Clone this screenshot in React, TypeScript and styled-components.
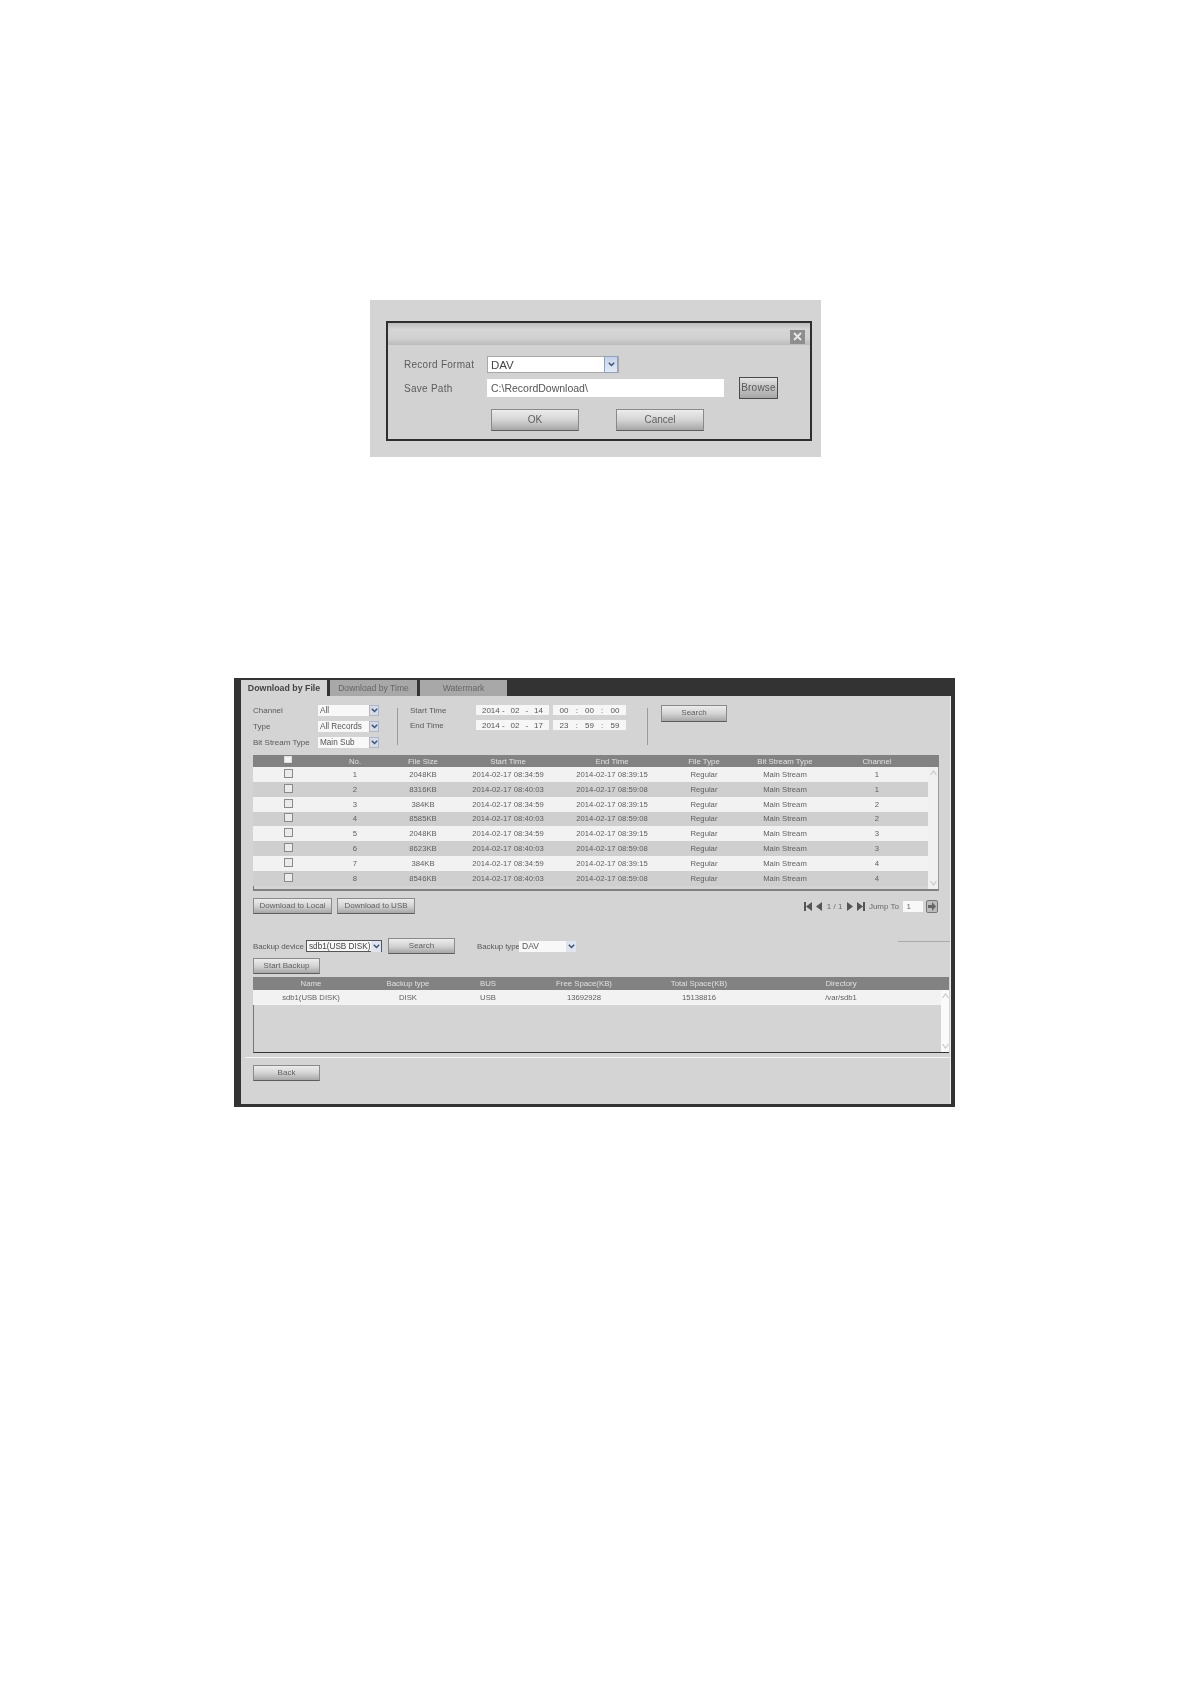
import React from 'react'
import styled, { createGlobalStyle } from 'styled-components'

const GlobalStyle = createGlobalStyle`
  html, body {
    margin: 0;
    padding: 0;
    background: #fff;
  }
  * {
    box-sizing: border-box;
  }
`

const files = [
  ['1', '2048KB', '2014-02-17 08:34:59', '2014-02-17 08:39:15', 'Regular', 'Main Stream', '1'],
  ['2', '8316KB', '2014-02-17 08:40:03', '2014-02-17 08:59:08', 'Regular', 'Main Stream', '1'],
  ['3', '384KB', '2014-02-17 08:34:59', '2014-02-17 08:39:15', 'Regular', 'Main Stream', '2'],
  ['4', '8585KB', '2014-02-17 08:40:03', '2014-02-17 08:59:08', 'Regular', 'Main Stream', '2'],
  ['5', '2048KB', '2014-02-17 08:34:59', '2014-02-17 08:39:15', 'Regular', 'Main Stream', '3'],
  ['6', '8623KB', '2014-02-17 08:40:03', '2014-02-17 08:59:08', 'Regular', 'Main Stream', '3'],
  ['7', '384KB', '2014-02-17 08:34:59', '2014-02-17 08:39:15', 'Regular', 'Main Stream', '4'],
  ['8', '8546KB', '2014-02-17 08:40:03', '2014-02-17 08:59:08', 'Regular', 'Main Stream', '4'],
]

const fileHead = ['No.', 'File Size', 'Start Time', 'End Time', 'File Type', 'Bit Stream Type', 'Channel']
const fileCols = '70px 64px 72px 98px 110px 74px 88px 96px 1fr'

const diskHead = ['Name', 'Backup type', 'BUS', 'Free Space(KB)', 'Total Space(KB)', 'Directory']
const diskRow = ['sdb1(USB DISK)', 'DISK', 'USB', '13692928', '15138816', '/var/sdb1']
const diskCols = '116px 78px 82px 110px 120px 164px 1fr'

const Chevron = () => (
  <svg width='7' height='5' viewBox='0 0 7 5'>
    <path d='M0.8 0.8 L3.5 3.6 L6.2 0.8' fill='none' stroke='#3a4f78' strokeWidth='1.4' />
  </svg>
)

const Select = ({ value, width }: { value: string; width: number }) => (
  <SelectBox $width={width}>
    <SelectText>{value}</SelectText>
    <SelectArrow>
      <Chevron />
    </SelectArrow>
  </SelectBox>
)

const PageIcon = ({ kind }: { kind: 'first' | 'prev' | 'next' | 'last' }) => {
  const paths = {
    first: 'M0 0h2v9H0z M8 0v9L2 4.5z',
    prev: 'M7 0v9L1 4.5z',
    next: 'M1 0v9l6-4.5z',
    last: 'M0 0v9l6-4.5z M6 0h2v9H6z',
  }
  return (
    <svg width='8' height='9' viewBox='0 0 8 9'>
      <path d={paths[kind]} fill='#555' />
    </svg>
  )
}

const ScrollBar = ({ width, white }: { width: number; white?: boolean }) => (
  <ScrollTrack $width={width} $white={white}>
    <svg width='7' height='6' viewBox='0 0 7 6'>
      <path d='M0.5 5 L3.5 1 L6.5 5' fill='none' stroke='#c4c8d0' strokeWidth='1.2' />
    </svg>
    <svg width='7' height='6' viewBox='0 0 7 6'>
      <path d='M0.5 1 L3.5 5 L6.5 1' fill='none' stroke='#c4c8d0' strokeWidth='1.2' />
    </svg>
  </ScrollTrack>
)

const App = () => {
  return (
    <Page>
      <GlobalStyle />
      <DialogShot>
        <DialogFrame>
          <DialogTitle>
            <CloseButton>
              <svg width='9' height='9' viewBox='0 0 9 9'>
                <path d='M1 1 L8 8 M8 1 L1 8' stroke='#e8e8e8' strokeWidth='1.8' />
              </svg>
            </CloseButton>
          </DialogTitle>
          <DialogBody>
            <FieldRow>
              <FieldLabel>Record Format</FieldLabel>
              <FormatSelect>
                <span>DAV</span>
                <FormatArrow>
                  <Chevron />
                </FormatArrow>
              </FormatSelect>
            </FieldRow>
            <FieldRow>
              <FieldLabel>Save Path</FieldLabel>
              <PathInput>C:\RecordDownload\</PathInput>
              <BrowseButton>Browse</BrowseButton>
            </FieldRow>
            <DialogActions>
              <Button $width={88} $height={22} $size={10}>OK</Button>
              <Button $width={88} $height={22} $size={10}>Cancel</Button>
            </DialogActions>
          </DialogBody>
        </DialogFrame>
      </DialogShot>

      <Shot>
        <TabBar>
          <Tab $active>Download by File</Tab>
          <Tab>Download by Time</Tab>
          <Tab>Watermark</Tab>
        </TabBar>
        <Content>
          <Filters>
            <FilterGrid>
              <SmallLabel>Channel</SmallLabel>
              <Select value='All' width={61} />
              <SmallLabel>Type</SmallLabel>
              <Select value='All Records' width={61} />
              <SmallLabel>Bit Stream Type</SmallLabel>
              <Select value='Main Sub' width={61} />
            </FilterGrid>
            <VerticalRule $gap={18} />
            <TimeGrid>
              <SmallLabel>Start Time</SmallLabel>
              <TimeField $width={73}><span>2014 -</span><span>02</span><span>-</span><span>14</span></TimeField>
              <TimeField $width={73}><span>00</span><span>:</span><span>00</span><span>:</span><span>00</span></TimeField>
              <SmallLabel>End Time</SmallLabel>
              <TimeField $width={73}><span>2014 -</span><span>02</span><span>-</span><span>17</span></TimeField>
              <TimeField $width={73}><span>23</span><span>:</span><span>59</span><span>:</span><span>59</span></TimeField>
            </TimeGrid>
            <VerticalRule $gap={21} />
            <SearchSlot>
              <Button $width={66} $height={17}>Search</Button>
            </SearchSlot>
          </Filters>

          <FileTable>
            <HeadRow $cols={fileCols}>
              <Cell><Check $header /></Cell>
              {fileHead.map((title) => (
                <Cell key={title}>{title}</Cell>
              ))}
            </HeadRow>
            <TableBody $height={124}>
              <Rows>
                {files.map((file, index) => (
                  <Row key={file[0]} $cols={fileCols} $odd={index % 2 === 0}>
                    <Cell><Check /></Cell>
                    {file.map((value, i) => (
                      <Cell key={i}>{value}</Cell>
                    ))}
                  </Row>
                ))}
              </Rows>
              <ScrollBar width={10} />
            </TableBody>
          </FileTable>

          <ActionRow>
            <Button $width={79} $height={16}>Download to Local</Button>
            <Button $width={78} $height={16}>Download to USB</Button>
            <Pager>
              <PageIcon kind='first' />
              <PageIcon kind='prev' />
              <span>1 / 1</span>
              <PageIcon kind='next' />
              <PageIcon kind='last' />
              <span>Jump To</span>
              <JumpInput>1</JumpInput>
              <GoButton>
                <svg width='8' height='9' viewBox='0 0 8 9'>
                  <path d='M0 3h4V0l4 4.5L4 9V6H0z' fill='#666' />
                </svg>
              </GoButton>
            </Pager>
          </ActionRow>

          <BackupRow>
            <BackupLabel $width={53}>Backup device</BackupLabel>
            <DeviceSelect>
              <span>sdb1(USB DISK)</span>
              <PlainArrow><Chevron /></PlainArrow>
            </DeviceSelect>
            <Button $width={67} $height={16}>Search</Button>
            <BackupType $width={42}>Backup type</BackupType>
            <TypeSelect>
              <span>DAV</span>
              <PlainArrow><Chevron /></PlainArrow>
            </TypeSelect>
            <ShortRule />
          </BackupRow>

          <StartRow>
            <Button $width={67} $height={16}>Start Backup</Button>
          </StartRow>

          <DiskTable>
            <HeadRow $cols={diskCols} $height={13}>
              {diskHead.map((title) => (
                <Cell key={title}>{title}</Cell>
              ))}
            </HeadRow>
            <TableBody $height={63} $dark>
              <Rows>
                <Row $cols={diskCols} $odd>
                  {diskRow.map((value) => (
                    <Cell key={value}>{value}</Cell>
                  ))}
                </Row>
              </Rows>
              <ScrollBar width={8} white />
            </TableBody>
          </DiskTable>

          <Separator />
          <BackRow>
            <Button $width={67} $height={16}>Back</Button>
          </BackRow>
        </Content>
      </Shot>
    </Page>
  )
}

const Page = styled.div`
  min-height: 1684px;
  padding: 300px 0 0 0;
  font-family: 'Liberation Sans', Arial, sans-serif;
  color: #555;
  background: #fff;
`

const DialogShot = styled.div`
  width: 451px;
  height: 157px;
  margin-left: 370px;
  padding: 21px 9px 16px 16px;
  background: #d4d4d4;
  filter: blur(0.35px);
`

const DialogFrame = styled.div`
  height: 120px;
  border: 2px solid #2e2e2e;
  background: #d2d2d2;
`

const DialogTitle = styled.div`
  height: 22px;
  display: flex;
  justify-content: flex-end;
  align-items: center;
  padding: 5px 5px 0 0;
  background: linear-gradient(#bdbdbd, #d6d6d6 30%, #d0d0d0 70%, #bcbcbc);
`

const CloseButton = styled.div`
  width: 15px;
  height: 14px;
  display: flex;
  align-items: center;
  justify-content: center;
  background: #8e8e8e;
`

const DialogBody = styled.div`
  padding: 11px 0 0 16px;
  display: flex;
  flex-direction: column;
  gap: 4px;
`

const FieldRow = styled.div`
  display: flex;
  align-items: center;
`

const FieldLabel = styled.div`
  width: 83px;
  font-size: 10px;
  letter-spacing: 0.27px;
  color: #5c5c5c;
`

const FormatSelect = styled.div`
  width: 132px;
  height: 17px;
  display: flex;
  align-items: center;
  justify-content: space-between;
  padding-left: 3px;
  background: #fff;
  border: 1px solid #a8a8a8;
  font-size: 11.5px;
  color: #444;
`

const FormatArrow = styled.div`
  width: 14px;
  height: 17px;
  display: flex;
  align-items: center;
  justify-content: center;
  background: linear-gradient(#c4d2ea, #e4eaf6);
  border: 1px solid #8ea2c0;
`

const PathInput = styled.div`
  width: 237px;
  height: 18px;
  padding-left: 4px;
  line-height: 18px;
  background: #fff;
  font-size: 10.5px;
  color: #555;
`

const BrowseButton = styled.div`
  width: 39px;
  height: 22px;
  margin-left: 15px;
  line-height: 20px;
  text-align: center;
  font-size: 10px;
  letter-spacing: 0.2px;
  border: 1px solid #4a4a4a;
  background: linear-gradient(#e2e2e2, #a6a6a6);
  color: #5a5a5a;
`

const DialogActions = styled.div`
  display: flex;
  gap: 37px;
  margin: 6px 0 0 87px;
`

const Button = styled.div<{ $width: number; $height: number; $size?: number }>`
  width: ${(p) => p.$width}px;
  height: ${(p) => p.$height}px;
  line-height: ${(p) => p.$height - 3}px;
  flex: none;
  text-align: center;
  font-size: ${(p) => p.$size ?? 8}px;
  color: #5e5e5e;
  border: 1px solid #8a8a8a;
  border-bottom-color: #5e5e5e;
  background: linear-gradient(#ececec, #d4d4d4 50%, #a6a6a6);
`

const Shot = styled.div`
  width: 721px;
  height: 429px;
  margin: 221px 0 0 234px;
  padding: 2px 4px 3px 7px;
  background: #333;
  filter: blur(0.35px);
`

const TabBar = styled.div`
  height: 16px;
  display: flex;
  gap: 3px;
`

const Tab = styled.div<{ $active?: boolean }>`
  width: ${(p) => (p.$active ? 86 : 87)}px;
  line-height: 16px;
  text-align: center;
  white-space: nowrap;
  font-size: ${(p) => (p.$active ? 8.8 : 8.6)}px;
  font-weight: ${(p) => (p.$active ? 700 : 400)};
  color: ${(p) => (p.$active ? '#444' : '#666')};
  background: ${(p) => (p.$active ? '#d4d4d4' : '#a8a8a8')};
`

const Content = styled.div`
  height: 408px;
  padding-left: 12px;
  background: #d4d4d4;
  border-right: 1px solid #eee;
`

const Filters = styled.div`
  height: 59px;
  padding-top: 9px;
  display: flex;
`

const SmallLabel = styled.div`
  font-size: 8px;
  color: #5a5a5a;
  white-space: nowrap;
`

const FilterGrid = styled.div`
  display: grid;
  grid-template-columns: 65px 61px;
  grid-auto-rows: 11px;
  row-gap: 5px;
  align-items: center;
  height: 43px;
`

const SelectBox = styled.div<{ $width: number }>`
  width: ${(p) => p.$width}px;
  height: 11px;
  display: flex;
  align-items: center;
  justify-content: space-between;
  background: #d4d4d4;
  font-size: 8.2px;
  color: #555;
`

const SelectText = styled.div`
  flex: 1;
  height: 11px;
  line-height: 11px;
  padding-left: 2px;
  background: #f8f8f8;
  white-space: nowrap;
`

const SelectArrow = styled.div`
  width: 10px;
  height: 11px;
  display: flex;
  align-items: center;
  justify-content: center;
  background: #d5dbe6;
  border: 1px solid #b0b8c6;
`

const VerticalRule = styled.div<{ $gap: number }>`
  width: 1px;
  height: 37px;
  margin: 3px 0 0 ${(p) => p.$gap}px;
  background: #9a9a9a;
`

const TimeGrid = styled.div`
  display: grid;
  grid-template-columns: 62px 73px 73px;
  grid-auto-rows: 10px;
  column-gap: 4px;
  row-gap: 5px;
  margin-left: 12px;
  align-items: center;
  align-content: start;
`

const TimeField = styled.div<{ $width: number }>`
  width: ${(p) => p.$width}px;
  height: 10px;
  display: flex;
  justify-content: space-around;
  align-items: center;
  padding: 0 3px;
  background: #f6f6f6;
  font-size: 8px;
  color: #555;
`

const SearchSlot = styled.div`
  margin-left: 13px;
`

const FileTable = styled.div`
  width: 686px;
`

const DiskTable = styled.div`
  width: 696px;
  margin-top: 3px;
`

const HeadRow = styled.div<{ $cols: string; $height?: number }>`
  display: grid;
  grid-template-columns: ${(p) => p.$cols};
  height: ${(p) => p.$height ?? 12}px;
  align-items: center;
  background: #828282;
  color: #e0e0e0;
  font-size: 7.8px;
`

const Cell = styled.div`
  display: flex;
  justify-content: center;
  white-space: nowrap;
`

const TableBody = styled.div<{ $height: number; $dark?: boolean }>`
  height: ${(p) => p.$height}px;
  display: flex;
  border-left: 1px solid #777;
  border-bottom: ${(p) => (p.$dark ? '1px solid #333' : '2px solid #808080')};
  border-right: ${(p) => (p.$dark ? 'none' : '1px solid #999')};
`

const Rows = styled.div`
  flex: 1;
`

const Row = styled.div<{ $cols: string; $odd: boolean }>`
  display: grid;
  grid-template-columns: ${(p) => p.$cols};
  height: 14.85px;
  margin-left: -1px;
  align-items: center;
  font-size: 7.7px;
  color: #5f5f5f;
  background: ${(p) => (p.$odd ? '#f2f2f2' : '#cfcfcf')};
`

const ScrollTrack = styled.div<{ $width: number; $white?: boolean }>`
  width: ${(p) => p.$width}px;
  display: flex;
  flex-direction: column;
  align-items: center;
  justify-content: space-between;
  padding: 3px 0;
  background: ${(p) => (p.$white ? '#fafafa' : '#f0f0f0')};
`

const Check = styled.div<{ $header?: boolean }>`
  width: ${(p) => (p.$header ? 8 : 9)}px;
  height: ${(p) => (p.$header ? 7 : 9)}px;
  margin-top: ${(p) => (p.$header ? -3 : -2)}px;
  border: 1px solid ${(p) => (p.$header ? '#ddd' : '#8a8a8a')};
  background: ${(p) => (p.$header ? '#f4f4f4' : '#ebebeb')};
`

const ActionRow = styled.div`
  width: 686px;
  height: 16px;
  margin-top: 7px;
  display: flex;
  align-items: center;
  gap: 5px;
`

const Pager = styled.div`
  margin-left: auto;
  margin-right: 1px;
  display: flex;
  align-items: center;
  gap: 3.5px;
  font-size: 8px;
  color: #6a6a6a;
`

const JumpInput = styled.div`
  width: 20px;
  height: 11px;
  padding-left: 4px;
  line-height: 11px;
  background: #f8f8f8;
`

const GoButton = styled.div`
  width: 12px;
  height: 13px;
  display: flex;
  align-items: center;
  justify-content: center;
  border: 1px solid #777;
  border-radius: 2px;
  background: #bcbcbc;
`

const BackupRow = styled.div`
  height: 16px;
  margin-top: 24px;
  display: flex;
  align-items: center;
`

const BackupLabel = styled(SmallLabel)<{ $width: number }>`
  width: ${(p) => p.$width}px;
  flex: none;
  letter-spacing: -0.1px;
`

const DeviceSelect = styled.div`
  width: 76px;
  height: 12px;
  margin-right: 6px;
  display: flex;
  align-items: center;
  justify-content: space-between;
  padding-left: 2px;
  background: #f8f8f8;
  border: 1px solid #555;
  font-size: 8.2px;
  color: #444;
  white-space: nowrap;
`

const PlainArrow = styled.div`
  width: 10px;
  height: 11px;
  flex: none;
  display: flex;
  align-items: center;
  justify-content: center;
  background: #dfe5ef;
`

const BackupType = styled(BackupLabel)`
  margin-left: 22px;
`

const TypeSelect = styled.div`
  width: 57px;
  height: 11px;
  display: flex;
  align-items: center;
  justify-content: space-between;
  padding-left: 3px;
  background: #f8f8f8;
  font-size: 8.5px;
  color: #555;
`

const ShortRule = styled.div`
  flex: 1;
  height: 1px;
  margin-left: 322px;
  align-self: flex-start;
  margin-top: 3px;
  background: #aaa;
`

const StartRow = styled.div`
  margin-top: 4px;
`

const Separator = styled.div`
  height: 1px;
  margin: 4px 0 0 -8px;
  background: #f4f4f4;
`

const BackRow = styled.div`
  margin-top: 7px;
`

export default App
